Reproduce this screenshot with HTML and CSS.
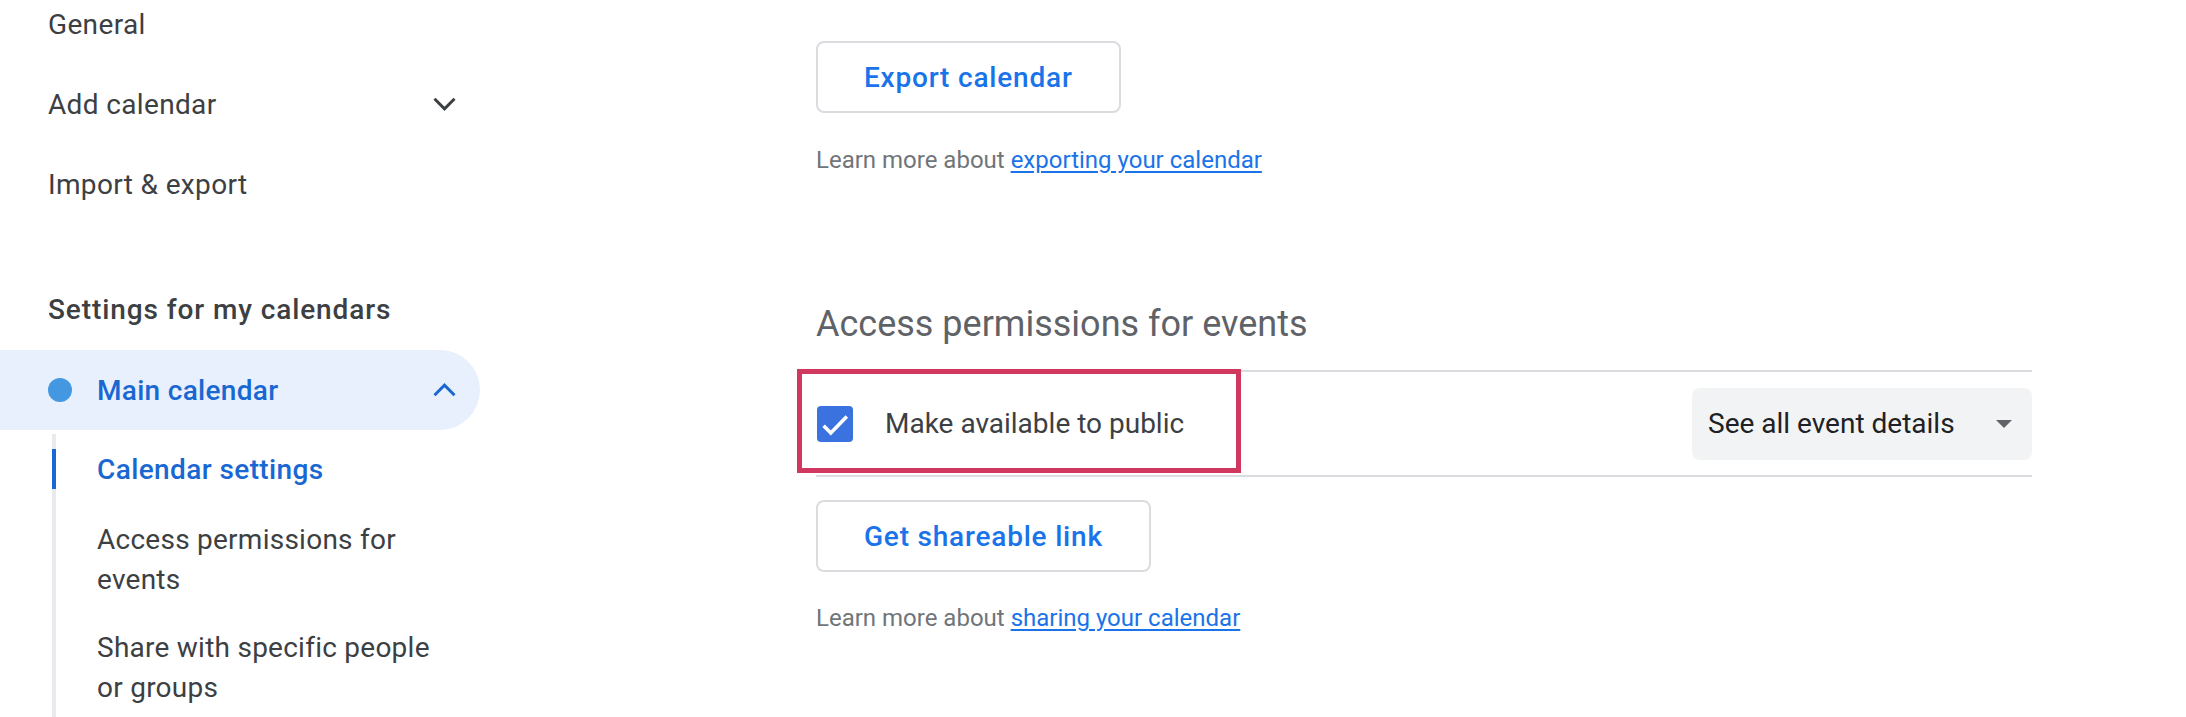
FILE: index.html
```html
<!DOCTYPE html>
<html lang="en">
<head>
<meta charset="utf-8">
<title>Settings</title>
<link rel="stylesheet" href="styles.css">
</head>
<body>
<div class="page">
  <nav class="sidenav">
    <div class="nav-item first">General</div>
    <div class="nav-item">
      <span>Add calendar</span>
      <svg class="chev" width="24" height="14" viewBox="0 0 24 14"><polyline points="2.5,1.8 12.5,11.8 22.5,1.8" fill="none" stroke="#3c4043" stroke-width="3"/></svg>
    </div>
    <div class="nav-item">Import &amp; export</div>
    <div class="nav-header">Settings for my calendars</div>
    <div class="nav-cal">
      <span class="dot"></span>
      <span class="cal-name">Main calendar</span>
      <svg class="chev" width="24" height="14" viewBox="0 0 24 14"><polyline points="2.5,12.2 12.5,2.2 22.5,12.2" fill="none" stroke="#1967d2" stroke-width="3"/></svg>
    </div>
    <div class="sub-list">
      <div class="sub-item active">Calendar settings</div>
      <div class="sub-item">Access permissions for events</div>
      <div class="sub-item">Share with specific people or groups</div>
    </div>
  </nav>

  <main class="content">
    <button class="btn">Export calendar</button>
    <p class="hint">Learn more about <a href="#">exporting your calendar</a></p>

    <h2 class="section-title">Access permissions for events</h2>
    <div class="perm-row">
      <span class="checkbox">
        <svg width="36" height="36" viewBox="0 0 18 18"><polyline points="3.3,9.9 6.9,13.5 14.9,5.2" fill="none" stroke="#fff" stroke-width="1.8"/></svg>
      </span>
      <span class="perm-label">Make available to public</span>
      <div class="select">
        <span>See all event details</span>
        <span class="caret"></span>
      </div>
      <div class="highlight"></div>
    </div>

    <button class="btn">Get shareable link</button>
    <p class="hint">Learn more about <a href="#">sharing your calendar</a></p>
  </main>
</div>
</body>
</html>
```
FILE: styles.css
```css
* { box-sizing: border-box; }
html, body {
  margin: 0;
  padding: 0;
  background: #fff;
  overflow: hidden;
}
body {
  font-family: Roboto, "Liberation Sans", Arial, sans-serif;
  color: #3c4043;
  height: 717px;
}
.page {
  display: flex;
  height: 717px;
}

/* Side navigation */
.sidenav {
  width: 480px;
  flex: none;
  display: flex;
  flex-direction: column;
  height: 717px;
  font-size: 28px;
}
.sidenav > * { flex-shrink: 0; }
.nav-item {
  height: 80px;
  display: flex;
  align-items: center;
  justify-content: space-between;
  padding: 0 24px 0 48px;
  color: #3c4043;
  letter-spacing: 0.35px;
}
.nav-item.first { margin-top: -16px; }
.chev { flex: none; }
.nav-header {
  margin-top: 66px;
  height: 40px;
  line-height: 40px;
  padding-left: 48px;
  font-weight: 500;
  color: #3c4043;
  letter-spacing: 0.9px;
}
.nav-cal {
  margin-top: 20px;
  height: 80px;
  display: flex;
  align-items: center;
  padding: 0 24px 0 48px;
  background: #e8f0fe;
  border-radius: 0 40px 40px 0;
  color: #1967d2;
  font-weight: 500;
}
.dot {
  width: 24px;
  height: 24px;
  border-radius: 50%;
  background: #4398e1;
  flex: none;
}
.cal-name {
  margin-left: 25px;
  flex: 1;
  letter-spacing: 0.3px;
}
.sub-list {
  margin: 4px 0 0 52px;
  border-left: 4px solid #e8eaed;
  flex: 1 0 auto;
}
.sub-item {
  position: relative;
  min-height: 72px;
  display: flex;
  align-items: center;
  padding: 14px 30px 14px 41px;
  line-height: 40px;
  color: #3c4043;
  letter-spacing: 0.25px;
}
.sub-item.active {
  color: #1967d2;
  font-weight: 500;
  letter-spacing: 0.4px;
  padding-top: 16px;
  padding-bottom: 16px;
}
.sub-item.active::before {
  content: "";
  position: absolute;
  left: -4px;
  top: 15px;
  width: 4px;
  height: 40px;
  background: #1967d2;
}

/* Main content */
.content {
  margin-left: 336px;
  padding-top: 41px;
  display: flex;
  flex-direction: column;
  align-items: flex-start;
  width: 1216px;
}
.btn {
  height: 72px;
  padding: 0 46px;
  border: 2px solid #dadce0;
  border-radius: 8px;
  background: #fff;
  color: #1a73e8;
  font-family: Roboto, "Liberation Sans", Arial, sans-serif;
  font-size: 28px;
  font-weight: 500;
  letter-spacing: 0.8px;
}
.hint {
  margin: 31px 0 0;
  font-size: 24px;
  line-height: 32px;
  color: #70757a;
}
.hint a {
  color: #1a73e8;
  text-decoration: underline;
  text-underline-offset: 3px;
}
.section-title {
  margin: 124px 0 0;
  font-size: 36px;
  line-height: 48px;
  font-weight: 400;
  color: #5f6368;
  letter-spacing: 0px;
}
.perm-row {
  position: relative;
  margin-top: 22px;
  width: 1216px;
  height: 107px;
  border-top: 2px solid #dadce0;
  border-bottom: 2px solid #dadce0;
  display: flex;
  align-items: center;
  padding-left: 1px;
}
.checkbox {
  width: 36px;
  height: 36px;
  border-radius: 4px;
  background: #3a73e0;
  display: flex;
  flex: none;
}
.perm-label {
  margin-left: 32px;
  font-size: 28px;
  color: #3c4043;
  flex: 1;
}
.select {
  width: 340px;
  height: 72px;
  border-radius: 8px;
  background: #f1f3f4;
  display: flex;
  align-items: center;
  justify-content: space-between;
  padding: 0 20px 0 16px;
  font-size: 28px;
  color: #202124;
}
.caret {
  width: 0;
  height: 0;
  border-left: 8px solid transparent;
  border-right: 8px solid transparent;
  border-top: 8px solid #5f6368;
}
.highlight {
  position: absolute;
  left: -19px;
  top: -3px;
  width: 444px;
  height: 104px;
  border: 5px solid #d0385f;
  pointer-events: none;
}
.perm-row + .btn { margin-top: 23px; }
.perm-row + .btn + .hint { margin-top: 30px; }
```
